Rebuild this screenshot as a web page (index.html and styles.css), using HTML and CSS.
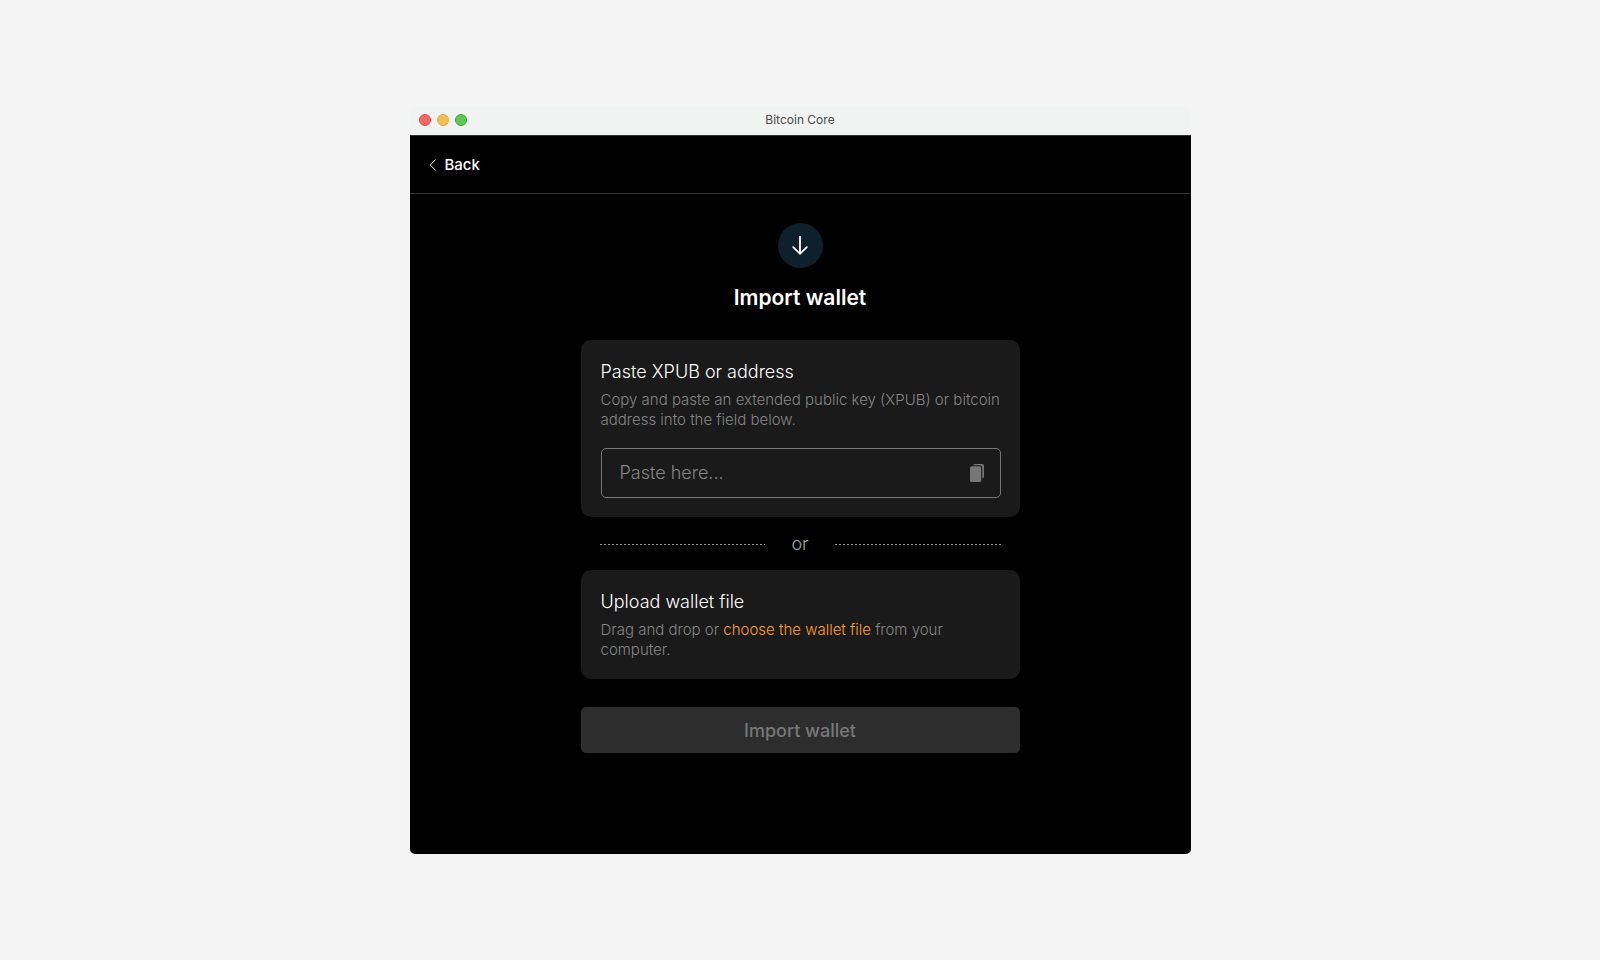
FILE: index.html
```html
<!DOCTYPE html>
<html lang="en">
<head>
<meta charset="utf-8">
<meta name="viewport" content="width=device-width, initial-scale=1">
<title>Bitcoin Core</title>
<link rel="stylesheet" href="styles.css">
</head>
<body>
<div class="window">
  <header class="titlebar">
    <div class="lights">
      <span class="light light-close"></span>
      <span class="light light-minimize"></span>
      <span class="light light-zoom"></span>
    </div>
    <span class="titlebar-text">Bitcoin Core</span>
  </header>
  <nav class="navbar">
    <a class="back" href="#back">
      <svg class="back-icon" viewBox="0 0 8 12" aria-hidden="true"><path d="M6.600 .700 1.200 6l5.400 5.300"/></svg>
      Back
    </a>
  </nav>
  <main class="content">
    <div class="badge">
      <svg class="badge-icon" viewBox="0 0 18 20" aria-hidden="true"><path d="M9 .800v17M2.200 11.200l6.800 6.600 6.800-6.600"/></svg>
    </div>
    <h1 class="heading">Import wallet</h1>
    <form class="form">
      <section class="card">
        <h2 class="card-title"><label for="key">Paste XPUB or address</label></h2>
        <p class="card-text">Copy and paste an extended public key (XPUB) or bitcoin address into the field below.</p>
        <div class="field">
          <input class="field-input" id="key" type="text" placeholder="Paste here...">
          <button class="field-button" type="button" aria-label="Paste">
            <svg class="paste-icon" viewBox="0 0 14 18" aria-hidden="true"><path d="M3.200 1.200Q3.600 0 4.800 0H12q2 0 2 2v10.600q0 1.500-1.700 2V4q0-2.800-2.600-2.800z"/><rect x="0" y="2.300" width="11.200" height="15.700" rx="1.600"/></svg>
          </button>
        </div>
      </section>
      <div class="divider">
        <svg class="divider-line" aria-hidden="true"><line x1="0" y1="0.500" x2="100%" y2="0.500"/></svg>
        <span>or</span>
        <svg class="divider-line" aria-hidden="true"><line x1="0" y1="0.500" x2="100%" y2="0.500"/></svg>
      </div>
      <section class="card">
        <h2 class="card-title">Upload wallet file</h2>
        <p class="card-text">Drag and drop or <a class="link" href="#choose">choose the wallet file</a> from your computer.</p>
      </section>
      <button class="submit" type="submit" disabled>Import wallet</button>
    </form>
  </main>
</div>
</body>
</html>
```
FILE: styles.css
```css
* {
  box-sizing: border-box;
}

body {
  margin: 0;
  min-height: 100vh;
  display: flex;
  align-items: center;
  justify-content: center;
  background: #f4f4f4;
  font-family: Inter, "Liberation Sans", sans-serif;
}

.window {
  width: 100%;
  max-width: 781px;
  border-radius: 5px;
  overflow: hidden;
  color: #fff;
}

.titlebar {
  display: grid;
  grid-template-columns: 1fr auto 1fr;
  align-items: center;
  height: 29px;
  padding: 0 9px 1px;
  background: #f0f3f2;
}

.lights {
  display: flex;
  gap: 6px;
}

.light {
  width: 12px;
  height: 12px;
  border: 1px solid;
  border-radius: 50%;
}

.light-close {
  background: #ed6a5f;
  border-color: #e24b41;
}

.light-minimize {
  background: #f5bf4f;
  border-color: #e1a73e;
}

.light-zoom {
  background: #61c554;
  border-color: #2dac2f;
}

.titlebar-text {
  font-size: 12px;
  line-height: 16px;
  color: #4a4a4a;
}

.navbar {
  display: flex;
  align-items: center;
  height: 59px;
  padding: 0 19px;
  border-top: 1px solid #333;
  border-bottom: 1px solid #333;
  background: #000;
}

.back {
  display: flex;
  align-items: center;
  gap: 8px;
  font-size: 15px;
  line-height: 20px;
  font-weight: 500;
  color: #fff;
  text-decoration: none;
}

.back-icon {
  width: 8px;
  height: 12px;
  fill: none;
  stroke: #fff;
  stroke-width: 1;
}

.content {
  display: flex;
  flex-direction: column;
  align-items: center;
  padding: 29px 20px 101px;
  background: #000;
}

.badge {
  display: grid;
  place-items: center;
  width: 45px;
  height: 45px;
  border-radius: 50%;
  background: #0e202b;
}

.badge-icon {
  width: 18px;
  height: 20px;
  fill: none;
  stroke: #fff;
  stroke-width: 1.8;
  stroke-linecap: round;
}

.heading {
  margin: 15px 0 28px;
  font-size: 21px;
  line-height: 29px;
  font-weight: 600;
}

.form {
  width: 100%;
  max-width: 439px;
}

.card {
  padding: 20px 19px 19px 20px;
  border-radius: 10px;
  background: #1a1a1a;
}

.card-title {
  margin: 0;
  font-size: 18px;
  line-height: 24px;
  font-weight: 300;
}

.card-text {
  margin: 6px -8px 0 0;
  font-size: 15px;
  line-height: 20px;
  font-weight: 300;
  color: #858585;
}

.link {
  color: #ff9f2a;
  text-decoration: none;
}

.field {
  display: flex;
  align-items: center;
  height: 50px;
  margin-top: 18px;
  border: 1px solid #777;
  border-radius: 5px;
}

.field-input {
  flex: 1;
  min-width: 0;
  padding: 0 0 0 18px;
  border: 0;
  outline: 0;
  background: transparent;
  color: #fff;
  font: inherit;
  font-size: 18px;
  line-height: 24px;
  font-weight: 300;
}

.field-input::placeholder {
  color: #858585;
}

.field-button {
  display: flex;
  padding: 0 16px;
  border: 0;
  background: transparent;
}

.paste-icon {
  width: 14px;
  height: 18px;
  fill: #777;
}

.divider {
  display: flex;
  align-items: center;
  gap: 26px;
  padding: 15px 19px 14px;
  font-size: 18px;
  line-height: 24px;
  font-weight: 300;
  color: #a3a3a3;
}

.divider-line {
  flex: 1;
  min-width: 0;
  height: 1px;
  stroke: #999;
  stroke-dasharray: 2 2;
}

.submit {
  display: block;
  width: 100%;
  height: 46px;
  margin-top: 28px;
  padding: 2px 8px 0;
  border: 0;
  border-radius: 5px;
  background: #2d2d2d;
  color: #777;
  font: inherit;
  font-size: 18px;
  line-height: 24px;
  font-weight: 500;
}
```
